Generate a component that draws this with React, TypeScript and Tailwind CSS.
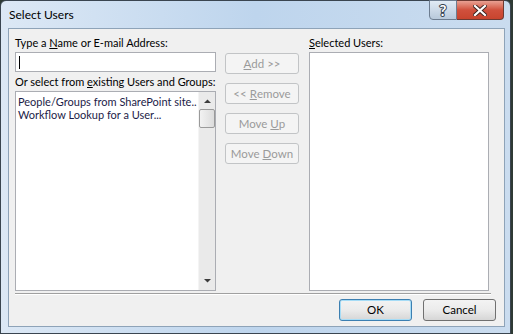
import React from "react"

const font = { fontFamily: 'Lato, "Noto Sans", sans-serif' }

function DisabledButton({ children }: { children: React.ReactNode }) {
  return (
    <div className="h-[21px] w-[74px] rounded-[3px] border border-[#c2c4c6] bg-[#f4f4f4] text-[#9a9a9a] text-[11.5px] flex items-center justify-center whitespace-nowrap">
      {children}
    </div>
  )
}

function Button({ children, isDefault }: { children: React.ReactNode; isDefault?: boolean }) {
  return (
    <div
      className={`h-[22px] w-[73px] rounded-[3px] border text-[11.5px] text-black flex items-center justify-center bg-gradient-to-b from-[#f3f3f3] via-[#ebebeb] to-[#d6d6d6] ${
        isDefault ? "border-[#3c7fb1] shadow-[inset_0_0_0_1px_#a6dcf6]" : "border-[#707070]"
      }`}
    >
      {children}
    </div>
  )
}

export default function App() {
  return (
    <div className="w-[513px] h-[334px] bg-[#2e3a34] overflow-hidden" style={font}>
      <div className="w-[511px] h-[334px] rounded-t-[6px] border border-[#3a4550] bg-gradient-to-r from-[#dce8f5] via-[#bed5ed] to-[#cadcef] flex flex-col pl-[7px] pr-[5px] relative">
        {/* title bar */}
        <div className="h-[27px] shrink-0 flex items-center">
          <span className="text-[12px] text-black ml-[1px] mt-[1px]">Select Users</span>
        </div>
        <div className="absolute top-[-1px] right-[6px] flex">
          <div className="w-[28px] h-[20px] rounded-bl-[4px] border border-[#6d7d90] bg-gradient-to-b from-[#e1ebf5] to-[#b8c9db] flex items-center justify-center">
            <span className="text-[15px] font-bold leading-none text-white [-webkit-text-stroke:2px_#34424f] [paint-order:stroke_fill]">?</span>
          </div>
          <div className="w-[47px] h-[20px] rounded-br-[4px] border border-l-0 border-[#6d3a32] bg-gradient-to-b from-[#e8a093] via-[#d0503c] to-[#c8442e] flex items-center justify-center">
            <svg width="14" height="11" viewBox="0 0 14 11">
              <path d="M2 1 L12 10 M12 1 L2 10" stroke="#3b2320" strokeWidth="4" strokeLinecap="square" />
              <path d="M2 1 L12 10 M12 1 L2 10" stroke="#ffffff" strokeWidth="2.2" strokeLinecap="square" />
            </svg>
          </div>
        </div>

        {/* content panel */}
        <div className="h-[299px] shrink-0 border border-[#8ea3b8] bg-[#f0f0f0] flex flex-col">
          <div className="flex pl-[6px]">
            {/* left column */}
            <div className="w-[201px] flex flex-col">
              <div className="text-[11px] text-black mt-[6px] h-[16px] leading-[16px] whitespace-nowrap">
                Type a <span className="underline">N</span>ame or E-mail Address:
              </div>
              <div className="mt-[1px] h-[20px] border border-[#abadb3] bg-white flex items-center pl-[3px]">
                <div className="w-[1px] h-[13px] bg-black" />
              </div>
              <div className="text-[11px] text-black mt-[2px] h-[16px] leading-[16px] whitespace-nowrap">
                Or select from <span className="underline">e</span>xisting Users and Groups:
              </div>
              <div className="mt-[1px] h-[200px] border border-[#abadb3] bg-white flex">
                <div className="flex-1 text-[11px] text-[#1c1c48] leading-[13px] pl-[2px] pt-[3px] whitespace-nowrap overflow-hidden">
                  <div>People/Groups from SharePoint site..</div>
                  <div>Workflow Lookup for a User...</div>
                </div>
                <div className="w-[17px] bg-[#eaeaea] border-l border-[#f4f4f4] flex flex-col items-center">
                  <svg width="17" height="16" viewBox="0 0 17 16" className="mt-[1px]">
                    <path d="M5 10 L8.5 6.5 L12 10 Z" fill="#3c3c3c" />
                  </svg>
                  <div className="w-[16px] h-[19px] rounded-[2px] border border-[#9a9a9a] bg-gradient-to-r from-[#f2f2f2] to-[#dcdcdc]" />
                  <div className="flex-1" />
                  <svg width="17" height="16" viewBox="0 0 17 16" className="mb-[1px]">
                    <path d="M5 6 L8.5 9.5 L12 6 Z" fill="#3c3c3c" />
                  </svg>
                </div>
              </div>
            </div>

            {/* middle buttons */}
            <div className="w-[93px] flex flex-col items-start gap-[9px] pt-[24px] pl-[9px]">
              <DisabledButton>
                <span className="underline">A</span>dd &gt;&gt;
              </DisabledButton>
              <DisabledButton>
                &lt;&lt;&nbsp;<span className="underline">R</span>emove
              </DisabledButton>
              <DisabledButton>
                Move&nbsp;<span className="underline">U</span>p
              </DisabledButton>
              <DisabledButton>
                Move&nbsp;<span className="underline">D</span>own
              </DisabledButton>
            </div>

            {/* right column */}
            <div className="w-[180px] flex flex-col">
              <div className="text-[11px] text-black mt-[6px] h-[16px] leading-[16px] whitespace-nowrap">
                <span className="underline">S</span>elected Users:
              </div>
              <div className="mt-[1px] h-[239px] border border-[#abadb3] bg-white" />
            </div>
          </div>

          {/* separator + buttons */}
          <div className="h-[1px] bg-[#a0a0a0] mt-[2px] ml-[6px] mr-[13px]" />
          <div className="h-[1px] bg-white ml-[6px] mr-[13px]" />
          <div className="flex justify-end gap-[11px] pt-[4px] pr-[8px]">
            <Button isDefault>OK</Button>
            <Button>Cancel</Button>
          </div>
        </div>
      </div>
    </div>
  )
}
